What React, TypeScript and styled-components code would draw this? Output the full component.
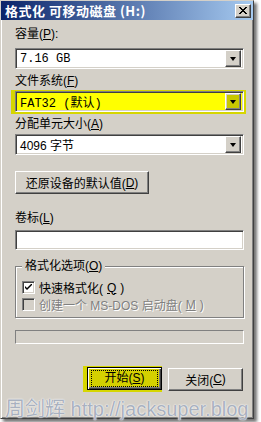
import styled, { createGlobalStyle, css } from "styled-components";

const GlobalStyle = createGlobalStyle`
  html, body {
    margin: 0;
    padding: 0;
    background: #ffffff;
  }
  body {
    font-family: "Liberation Sans", "Noto Sans CJK SC", sans-serif;
    font-size: 12px;
  }
`;

const face = "#D4D0C8";

const raised = css`
  border-style: solid;
  border-width: 1px;
  border-color: #ffffff #404040 #404040 #ffffff;
  box-shadow: inset -1px -1px 0 #808080, inset 1px 1px 0 ${face};
`;

const sunken = css`
  border-style: solid;
  border-width: 1px;
  border-color: #808080 #ffffff #ffffff #808080;
  box-shadow: inset 1px 1px 0 #404040, inset -1px -1px 0 ${face};
`;

const Stage = styled.div`
  width: 261px;
  height: 422px;
  overflow: hidden;
`;

const Window = styled.div`
  width: 252px;
  height: 417px;
  background: ${face};
  border-style: solid;
  border-width: 1px;
  border-color: ${face} #404040 #404040 ${face};
  box-shadow: inset 1px 1px 0 #ffffff, inset -1px -1px 0 #808080,
    3px 3px 3px rgba(0, 0, 0, 0.55);
  display: flex;
  flex-direction: column;
`;

const TitleBar = styled.div`
  height: 19px;
  background: linear-gradient(to right, #0a246a, #a6caf0);
  display: flex;
  align-items: center;
  justify-content: space-between;
  padding: 0 2px 0 4px;
`;

const Title = styled.span`
  color: #ffffff;
  font-family: "Noto Sans CJK SC", sans-serif;
  font-weight: bold;
  font-size: 13px;
  letter-spacing: 0.5px;
  white-space: pre;
`;

const CloseButton = styled.div`
  width: 14px;
  height: 12px;
  background: ${face};
  ${raised};
  display: flex;
  align-items: center;
  justify-content: center;
`;

const Body = styled.div`
  padding: 7px 0 0 14px;
  width: 229px;
  display: flex;
  flex-direction: column;
`;

const Label = styled.div<{ $top?: number; $bottom?: number }>`
  height: 14px;
  line-height: 14px;
  color: #000;
  margin-top: ${(p) => p.$top ?? 0}px;
  margin-bottom: ${(p) => p.$bottom ?? 7}px;
  white-space: pre;
`;

const Key = styled.span`
  text-decoration: underline;
`;

const Combo = styled.div<{ $hi?: boolean }>`
  height: 21px;
  box-sizing: border-box;
  ${sunken};
  background: ${(p) => (p.$hi ? "#ffff00" : "#ffffff")};
  display: flex;
  align-items: center;
  padding: 2px;
`;

const ComboText = styled.div<{ $mono?: boolean }>`
  flex: 1;
  padding-left: 2px;
  font-family: ${(p) =>
    p.$mono
      ? `"Liberation Mono", "Noto Sans CJK SC", monospace`
      : `"Liberation Sans", "Noto Sans CJK SC", sans-serif`};
  font-size: 12px;
  white-space: pre;
`;

const DropButton = styled.div<{ $hi?: boolean }>`
  width: 16px;
  height: 17px;
  box-sizing: border-box;
  background: ${(p) => (p.$hi ? "#c8c800" : face)};
  ${raised};
  display: flex;
  align-items: center;
  justify-content: center;
`;

const Arrow = styled.div`
  width: 0;
  height: 0;
  border-left: 3.5px solid transparent;
  border-right: 3.5px solid transparent;
  border-top: 4px solid #000;
`;

const Highlight = styled.div`
  margin: 0 -2px 0 -4px;
  padding: 1px 2px 2px 4px;
  background: #d6d600;
`;

const PushButton = styled.div<{ $w: number; $default?: boolean }>`
  width: ${(p) => p.$w}px;
  height: 23px;
  box-sizing: border-box;
  background: ${(p) => (p.$default ? "#d4d000" : face)};
  display: flex;
  align-items: center;
  justify-content: center;
  white-space: pre;
  ${(p) =>
    p.$default
      ? css`
          border: 1px solid #000;
          box-shadow: inset 1px 1px 0 #ffffff, inset -1px -1px 0 #404040,
            inset -2px -2px 0 #808080;
        `
      : raised}
`;

const Focus = styled.div`
  border: 1px dotted #000;
  padding: 1px 12px;
  line-height: 13px;
`;

const TextBox = styled.div`
  height: 20px;
  box-sizing: border-box;
  ${sunken};
  background: #fff;
`;

const Group = styled.div`
  margin-top: 16px;
  padding: 0 0 4px 6px;
  border: 1px solid #808080;
  box-shadow: 1px 1px 0 #ffffff, inset 1px 1px 0 #ffffff;
  display: flex;
  flex-direction: column;
`;

const Legend = styled.div`
  align-self: flex-start;
  margin: -7px 0 6px 0;
  padding: 0 3px;
  height: 13px;
  line-height: 13px;
  background: ${face};
  white-space: pre;
`;

const CheckRow = styled.div<{ $disabled?: boolean }>`
  display: flex;
  align-items: center;
  gap: 4px;
  height: 17px;
  color: ${(p) => (p.$disabled ? "#808080" : "#000")};
  text-shadow: ${(p) => (p.$disabled ? "1px 1px 0 #ffffff" : "none")};
  white-space: pre;
`;

const CheckBox = styled.div<{ $disabled?: boolean }>`
  width: 13px;
  height: 13px;
  box-sizing: border-box;
  ${sunken};
  background: ${(p) => (p.$disabled ? face : "#fff")};
  display: flex;
  align-items: center;
  justify-content: center;
`;

const Progress = styled.div`
  margin-top: 12px;
  height: 14px;
  box-sizing: border-box;
  border: 1px solid;
  border-color: #808080 #ffffff #ffffff #808080;
`;

const ButtonRow = styled.div`
  margin-top: 22px;
  display: flex;
  justify-content: flex-end;
  align-items: center;
  gap: 6px;
  padding-right: 1px;
`;

const StartWrap = styled.div`
  padding: 1px 0 2px 4px;
  background: #d6d600;
`;

const Watermark = styled.div`
  margin: 6px 0 0 4px;
  font-family: "Liberation Sans", "Noto Sans CJK SC", sans-serif;
  font-size: 20px;
  line-height: 23px;
  color: #a9b1bf;
  text-shadow: 0 0 2px #ffffff, 0 0 1px #ffffff;
  white-space: pre;
`;

export default function App() {
  return (
    <Stage>
      <GlobalStyle />
      <Window>
        <TitleBar>
          <Title>格式化 可移动磁盘 (H:)</Title>
          <CloseButton>
            <svg width="8" height="7" viewBox="0 0 8 7">
              <path d="M0 0 L7 7 M1 0 L8 7 M7 0 L0 7 M8 0 L1 7" stroke="#000" strokeWidth="1" />
            </svg>
          </CloseButton>
        </TitleBar>
        <Body>
          <Label>
            容量(<Key>P</Key>):
          </Label>
          <Combo>
            <ComboText $mono>7.16 GB</ComboText>
            <DropButton>
              <Arrow />
            </DropButton>
          </Combo>
          <Label $top={5} $bottom={2}>
            文件系统(<Key>F</Key>)
          </Label>
          <Highlight>
            <Combo $hi>
              <ComboText $mono>FAT32 (默认)</ComboText>
              <DropButton $hi>
                <Arrow />
              </DropButton>
            </Combo>
          </Highlight>
          <Label $top={3} $bottom={3}>
            分配单元大小(<Key>A</Key>)
          </Label>
          <Combo>
            <ComboText>4096 字节</ComboText>
            <DropButton>
              <Arrow />
            </DropButton>
          </Combo>
          <PushButton $w={134} style={{ marginTop: 16 }}>
            还原设备的默认值(<Key>D</Key>)
          </PushButton>
          <Label $top={17} $bottom={5}>
            卷标(<Key>L</Key>)
          </Label>
          <TextBox />
          <Group>
            <Legend>
              格式化选项(<Key>O</Key>)
            </Legend>
            <CheckRow>
              <CheckBox>
                <svg width="7" height="7" viewBox="0 0 7 7">
                  <path d="M0 2 L0 4 L2 6 L7 1 L7 -1 L2 4 Z" fill="#000" />
                </svg>
              </CheckBox>
              快速格式化(<Key>Q</Key>)
            </CheckRow>
            <CheckRow $disabled>
              <CheckBox $disabled />
              创建一个 MS-DOS 启动盘(<Key>M</Key>)
            </CheckRow>
          </Group>
          <Progress />
          <ButtonRow>
            <StartWrap>
              <PushButton $w={75} $default>
                <Focus>
                  开始(<Key>S</Key>)
                </Focus>
              </PushButton>
            </StartWrap>
            <PushButton $w={75}>
              关闭(<Key>C</Key>)
            </PushButton>
          </ButtonRow>
        </Body>
        <Watermark>周剑辉 http://jacksuper.blog</Watermark>
      </Window>
    </Stage>
  );
}
